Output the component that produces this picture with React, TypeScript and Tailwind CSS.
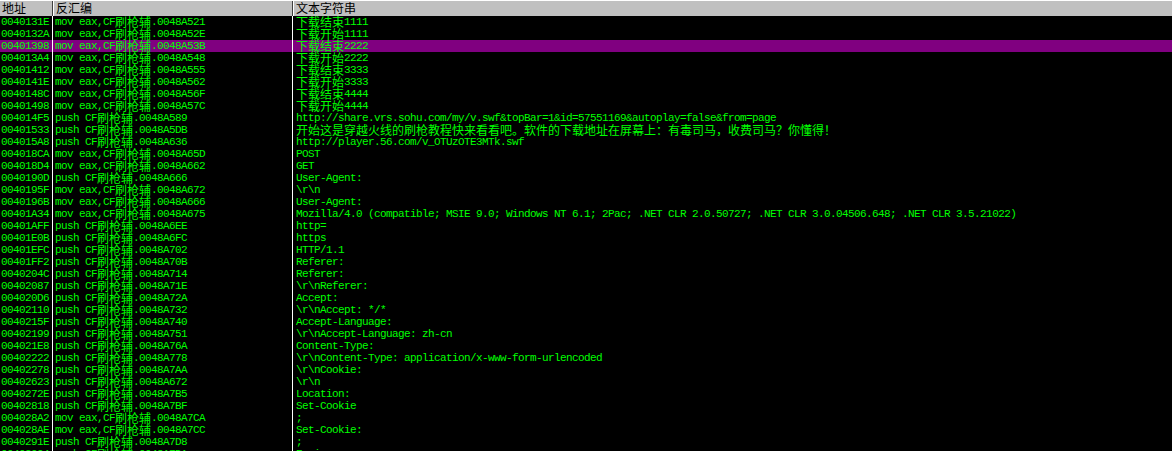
import React from 'react';

type Row = [string, string, string];

const rows: Row[] = [
  ['0040131E', 'mov eax,CF刷枪辅.0048A521', '下载结束1111'],
  ['0040132A', 'mov eax,CF刷枪辅.0048A52E', '下载开始1111'],
  ['00401398', 'mov eax,CF刷枪辅.0048A53B', '下载结束2222'],
  ['004013A4', 'mov eax,CF刷枪辅.0048A548', '下载开始2222'],
  ['00401412', 'mov eax,CF刷枪辅.0048A555', '下载结束3333'],
  ['0040141E', 'mov eax,CF刷枪辅.0048A562', '下载开始3333'],
  ['0040148C', 'mov eax,CF刷枪辅.0048A56F', '下载结束4444'],
  ['00401498', 'mov eax,CF刷枪辅.0048A57C', '下载开始4444'],
  ['004014F5', 'push CF刷枪辅.0048A589', 'http://share.vrs.sohu.com/my/v.swf&topBar=1&id=57551169&autoplay=false&from=page'],
  ['00401533', 'push CF刷枪辅.0048A5DB', '开始这是穿越火线的刷枪教程快来看看吧。软件的下载地址在屏幕上：有毒司马，收费司马？你懂得！'],
  ['004015A8', 'push CF刷枪辅.0048A636', 'http://player.56.com/v_OTUzOTE3MTk.swf'],
  ['004018CA', 'mov eax,CF刷枪辅.0048A65D', 'POST'],
  ['004018D4', 'mov eax,CF刷枪辅.0048A662', 'GET'],
  ['0040190D', 'push CF刷枪辅.0048A666', 'User-Agent:'],
  ['0040195F', 'mov eax,CF刷枪辅.0048A672', '\\r\\n'],
  ['0040196B', 'mov eax,CF刷枪辅.0048A666', 'User-Agent:'],
  ['00401A34', 'mov eax,CF刷枪辅.0048A675', 'Mozilla/4.0 (compatible; MSIE 9.0; Windows NT 6.1; 2Pac; .NET CLR 2.0.50727; .NET CLR 3.0.04506.648; .NET CLR 3.5.21022)'],
  ['00401AFF', 'push CF刷枪辅.0048A6EE', 'http='],
  ['00401E0B', 'push CF刷枪辅.0048A6FC', 'https'],
  ['00401EFC', 'push CF刷枪辅.0048A702', 'HTTP/1.1'],
  ['00401FF2', 'push CF刷枪辅.0048A70B', 'Referer:'],
  ['0040204C', 'push CF刷枪辅.0048A714', 'Referer:'],
  ['00402087', 'push CF刷枪辅.0048A71E', '\\r\\nReferer:'],
  ['004020D6', 'push CF刷枪辅.0048A72A', 'Accept:'],
  ['00402110', 'push CF刷枪辅.0048A732', '\\r\\nAccept: */*'],
  ['0040215F', 'push CF刷枪辅.0048A740', 'Accept-Language:'],
  ['00402199', 'push CF刷枪辅.0048A751', '\\r\\nAccept-Language: zh-cn'],
  ['004021E8', 'push CF刷枪辅.0048A76A', 'Content-Type:'],
  ['00402222', 'push CF刷枪辅.0048A778', '\\r\\nContent-Type: application/x-www-form-urlencoded'],
  ['00402278', 'push CF刷枪辅.0048A7AA', '\\r\\nCookie:'],
  ['00402623', 'push CF刷枪辅.0048A672', '\\r\\n'],
  ['0040272E', 'push CF刷枪辅.0048A7B5', 'Location:'],
  ['00402818', 'push CF刷枪辅.0048A7BF', 'Set-Cookie'],
  ['004028A2', 'mov eax,CF刷枪辅.0048A7CA', ';'],
  ['004028AE', 'mov eax,CF刷枪辅.0048A7CC', 'Set-Cookie:'],
  ['0040291E', 'push CF刷枪辅.0048A7D8', ';'],
  ['00402994', 'push CF刷枪辅.0048A7DA', 'Expires:'],
];

// CJK glyphs are double width (12px) next to 6px ascii cells
const Mixed: React.FC<{ text: string }> = ({ text }) => {
  const parts = text.split(/([\u3000-\u303f\u4e00-\u9fff\uff00-\uffef]+)/).filter((p) => p !== '');
  return (
    <div className="flex items-center h-[12px]">
      {parts.map((p, i) =>
        /[\u3000-\u303f\u4e00-\u9fff\uff00-\uffef]/.test(p) ? (
          <span key={i} className="font-['Noto_Sans_CJK_SC',sans-serif] text-[12px] leading-[12px] tracking-normal">
            {p}
          </span>
        ) : (
          <span key={i} className="leading-[12px]">{p}</span>
        )
      )}
    </div>
  );
};

export default function App() {
  return (
    <div className="w-[1172px] h-[451px] overflow-hidden bg-black font-['Liberation_Mono',monospace] text-[11px] tracking-[-0.6px] leading-[12px] text-[#00ff00]">
      <div className="flex h-[16px] bg-[#c0c0c0] border-t border-white text-black font-['Noto_Sans_CJK_SC',sans-serif] text-[12px] leading-[14px] tracking-normal">
        <div className="w-[53px] shrink-0 border-r border-[#404040] pl-[2px]">地址</div>
        <div className="w-[240px] shrink-0 border-l border-white border-r border-r-[#404040] pl-[2px]">反汇编</div>
        <div className="flex-1 border-l border-white pl-[2px]">文本字符串</div>
      </div>
      {rows.map(([addr, asm, str], i) => (
        <div
          key={addr + i}
          className={`flex h-[12px] whitespace-pre ${i === 2 ? 'bg-[#800080]' : ''}`}
        >
          <div className="w-[53px] shrink-0 border-r border-white pl-[1px] overflow-hidden">{addr}</div>
          <div className="w-[240px] shrink-0 border-r border-white pl-[2px] overflow-hidden">
            <Mixed text={asm} />
          </div>
          <div className="flex-1 pl-[3px] overflow-hidden">
            <Mixed text={str} />
          </div>
        </div>
      ))}
    </div>
  );
}
